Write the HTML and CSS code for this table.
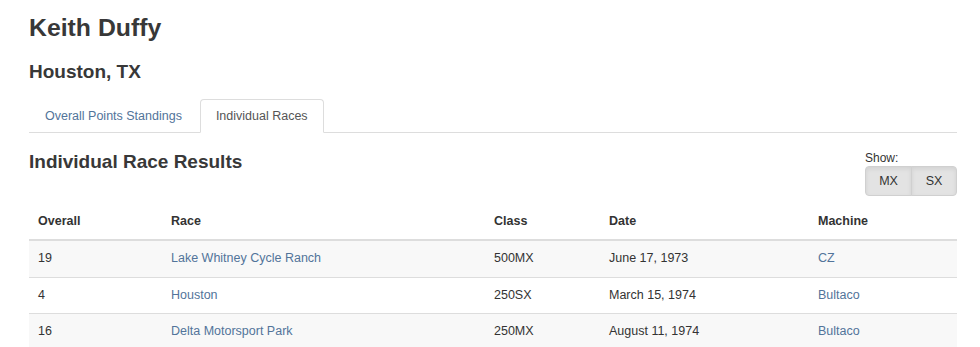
FILE: index.html
```html
<!DOCTYPE html>
<html>
<head>
<meta charset="utf-8">
<link rel="stylesheet" href="styles.css">
</head>
<body>
<div class="container">
  <h1 class="name">Keith Duffy</h1>
  <h2 class="hometown">Houston, TX</h2>
  <ul class="tabs">
    <li class="tab"><a href="#">Overall Points Standings</a></li>
    <li class="tab active"><a href="#">Individual Races</a></li>
  </ul>
  <div class="section-head">
    <h3 class="section-title">Individual Race Results</h3>
    <div class="show">
      <div class="show-label">Show:</div>
      <div class="btn-group">
        <button class="btn">MX</button>
        <button class="btn">SX</button>
      </div>
    </div>
  </div>
  <table class="results">
    <thead>
      <tr>
        <th class="c-overall">Overall</th>
        <th class="c-race">Race</th>
        <th class="c-class">Class</th>
        <th class="c-date">Date</th>
        <th class="c-machine">Machine</th>
      </tr>
    </thead>
    <tbody>
      <tr>
        <td>19</td>
        <td><a href="#">Lake Whitney Cycle Ranch</a></td>
        <td>500MX</td>
        <td>June 17, 1973</td>
        <td><a href="#">CZ</a></td>
      </tr>
      <tr>
        <td>4</td>
        <td><a href="#">Houston</a></td>
        <td>250SX</td>
        <td>March 15, 1974</td>
        <td><a href="#">Bultaco</a></td>
      </tr>
      <tr>
        <td>16</td>
        <td><a href="#">Delta Motorsport Park</a></td>
        <td>250MX</td>
        <td>August 11, 1974</td>
        <td><a href="#">Bultaco</a></td>
      </tr>
    </tbody>
  </table>
</div>
</body>
</html>
```
FILE: styles.css
```css
html, body {
  margin: 0;
  padding: 0;
  background: #fff;
}
body {
  font-family: "Liberation Sans", Arial, sans-serif;
  font-size: 12.5px;
  line-height: 1.42857;
  color: #333;
}
a {
  color: #52749a;
  text-decoration: none;
}
.container {
  margin-left: 29px;
  width: 928px;
}
.name {
  margin: 0;
  padding-top: 13px;
  font-size: 24.8px;
  line-height: 30px;
  font-weight: bold;
  color: #383838;
}
.hometown {
  margin: 0;
  padding-top: 18px;
  font-size: 19px;
  line-height: 22px;
  font-weight: bold;
  color: #383838;
}
.tabs {
  list-style: none;
  margin: 16px 0 0 0;
  padding: 0;
  display: flex;
  border-bottom: 1px solid #ddd;
}
.tab {
  margin-bottom: -1px;
  margin-right: 2px;
}
.tab a {
  display: block;
  padding: 8px 15px;
  line-height: 16px;
  border: 1px solid transparent;
  border-radius: 4px 4px 0 0;
}
.tab.active a {
  color: #555;
  background: #fff;
  border-color: #ddd #ddd transparent #ddd;
}
.section-head {
  display: flex;
  justify-content: space-between;
  align-items: flex-start;
  margin-top: 17px;
}
.section-title {
  margin: 0;
  font-size: 19px;
  line-height: 24px;
  font-weight: bold;
  color: #383838;
}
.show {
  margin-top: 0;
  font-size: 12px;
}
.show-label {
  line-height: 16px;
  color: #333;
}
.btn-group {
  display: flex;
}
.btn {
  font-family: "Liberation Sans", Arial, sans-serif;
  font-size: 12.5px;
  color: #333;
  background: #e3e3e3;
  border: 1px solid #d0d0d0;
  padding: 6px 12px;
  line-height: 16px;
  height: 30px;
  box-shadow: inset 0 2px 4px rgba(0,0,0,0.08);
}
.btn:first-child {
  border-radius: 4px 0 0 4px;
  width: 47px;
}
.btn:last-child {
  border-radius: 0 4px 4px 0;
  margin-left: -1px;
  width: 46px;
}
.results {
  width: 100%;
  border-collapse: collapse;
  margin-top: 8px;
}
.results th {
  text-align: left;
  font-weight: bold;
  padding: 8px 9px;
  line-height: 19px;
  border-bottom: 2px solid #ddd;
}
.results td {
  padding: 8px 9px;
  line-height: 19.5px;
  border-top: 1px solid #ddd;
}
.results tbody tr:nth-child(odd) {
  background: #f8f8f8;
}
.c-overall { width: 115px; }
.c-race { width: 305px; }
.c-class { width: 97px; }
.c-date { width: 191px; }
```
